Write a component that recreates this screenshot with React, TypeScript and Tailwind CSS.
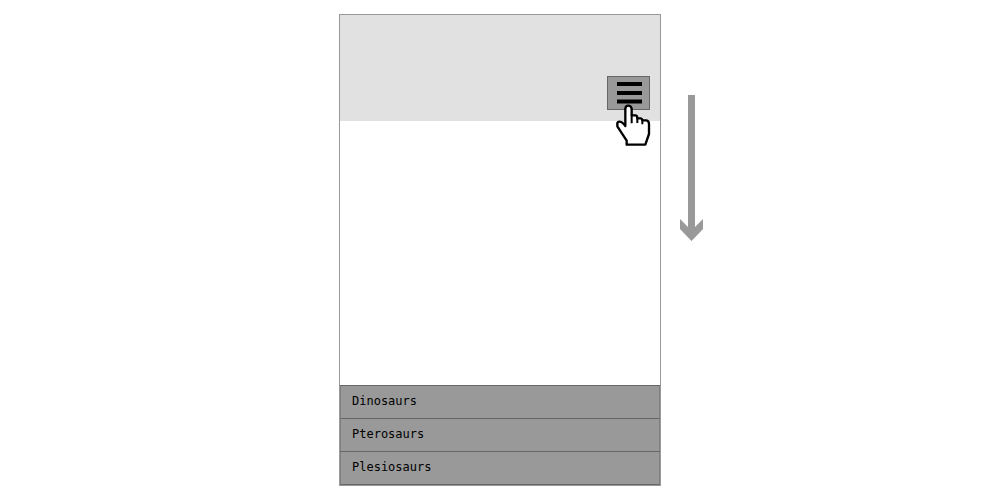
const links = ['Dinosaurs', 'Pterosaurs', 'Plesiosaurs'];

function Pointer() {
  return (
    <svg
      className="pointer-events-none absolute top-7 left-2 h-[43px] w-9"
      viewBox="0 0 108 129"
      aria-hidden="true"
    >
      <path
        d="M31 66V14Q32 5 40 5Q48 5 50 14V34H62Q67 35 67 43H77Q82 44 82 49H94Q102 50 102 60V90L91 122H35V110L7 67V57Q9 52 15 53Q22 54 27 61L31 66Z"
        fill="#fff"
        stroke="#000"
        strokeWidth="7"
        strokeLinejoin="round"
      />
      <path d="M50 32V58M67 40V57M82 46V61" stroke="#000" strokeWidth="6" />
    </svg>
  );
}

export default function App() {
  return (
    <main className="grid min-h-screen grid-cols-[1fr_auto_1fr] bg-white py-3.5 font-['DejaVu_Sans_Mono',monospace] text-xs text-black">
      <div className="col-start-2 flex w-[322px] flex-col border border-[#999] bg-white">
        <header className="flex h-[106px] items-end justify-end bg-[#e1e1e1] px-2.5 pb-[11px]">
          <div className="relative">
            <button
              type="button"
              aria-label="Toggle menu"
              className="flex h-[34px] w-[43px] items-start border border-[#666] bg-[#999] pt-[5px] pl-[9px]"
            >
              <svg className="h-[22px] w-[25px]" viewBox="0 0 25 22" aria-hidden="true">
                <path d="M0 2H25M0 11H25M0 19.5H25" stroke="#000" strokeWidth="4" />
              </svg>
            </button>
            <Pointer />
          </div>
        </header>
        <div className="min-h-20 flex-1" />
        <nav className="border-t border-[#666] bg-[#999]">
          <ul>
            {links.map((name) => (
              <li key={name}>
                <a
                  href={`#${name.toLowerCase()}`}
                  className="block border-x border-b border-x-[#808080] border-b-[#666] px-[11px] pt-[7px] pb-[9px] leading-4"
                >
                  {name}
                </a>
              </li>
            ))}
          </ul>
        </nav>
      </div>
      <div className="pt-20 pl-[19px]">
        <svg className="h-[148px] w-[23px]" viewBox="0 0 23 148" aria-hidden="true">
          <path d="M8 1H15V133L23 125V135L11.5 147L0 135V125L8 133Z" fill="#999" />
        </svg>
      </div>
    </main>
  );
}
